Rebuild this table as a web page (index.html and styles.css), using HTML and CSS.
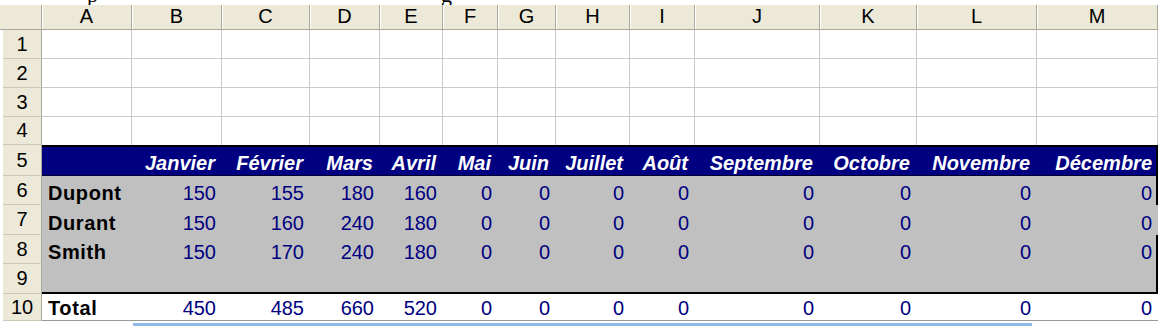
FILE: index.html
```html
<!DOCTYPE html>
<html lang="fr">
<head>
<meta charset="utf-8">
<title>Feuille</title>
<link rel="stylesheet" href="styles.css">
</head>
<body>
<div class="strip"><span class="frag p">p</span><span class="frag g">g</span></div>
<div class="sheet">
  <div class="corner"></div>
  <div class="ch">A</div><div class="ch">B</div><div class="ch">C</div><div class="ch">D</div><div class="ch">E</div><div class="ch">F</div><div class="ch">G</div><div class="ch">H</div><div class="ch">I</div><div class="ch">J</div><div class="ch">K</div><div class="ch">L</div><div class="ch">M</div>

  <div class="rh">1</div>
  <div class="c"></div><div class="c"></div><div class="c"></div><div class="c"></div><div class="c"></div><div class="c"></div><div class="c"></div><div class="c"></div><div class="c"></div><div class="c"></div><div class="c"></div><div class="c"></div><div class="c"></div>
  <div class="rh">2</div>
  <div class="c"></div><div class="c"></div><div class="c"></div><div class="c"></div><div class="c"></div><div class="c"></div><div class="c"></div><div class="c"></div><div class="c"></div><div class="c"></div><div class="c"></div><div class="c"></div><div class="c"></div>
  <div class="rh">3</div>
  <div class="c"></div><div class="c"></div><div class="c"></div><div class="c"></div><div class="c"></div><div class="c"></div><div class="c"></div><div class="c"></div><div class="c"></div><div class="c"></div><div class="c"></div><div class="c"></div><div class="c"></div>
  <div class="rh">4</div>
  <div class="c c4"></div><div class="c c4"></div><div class="c c4"></div><div class="c c4"></div><div class="c c4"></div><div class="c c4"></div><div class="c c4"></div><div class="c c4"></div><div class="c c4"></div><div class="c c4"></div><div class="c c4"></div><div class="c c4"></div><div class="c c4"></div>

  <div class="rh">5</div>
  <div class="mh"></div><div class="mh">Janvier</div><div class="mh">Février</div><div class="mh">Mars</div><div class="mh">Avril</div><div class="mh">Mai</div><div class="mh">Juin</div><div class="mh">Juillet</div><div class="mh">Août</div><div class="mh">Septembre</div><div class="mh">Octobre</div><div class="mh">Novembre</div><div class="mh edge">Décembre</div>

  <div class="rh">6</div>
  <div class="nm">Dupont</div><div class="n">150</div><div class="n">155</div><div class="n">180</div><div class="n">160</div><div class="n">0</div><div class="n">0</div><div class="n">0</div><div class="n">0</div><div class="n">0</div><div class="n">0</div><div class="n">0</div><div class="n edge">0</div>

  <div class="rh">7</div>
  <div class="nm">Durant</div><div class="n">150</div><div class="n">160</div><div class="n">240</div><div class="n">180</div><div class="n">0</div><div class="n">0</div><div class="n">0</div><div class="n">0</div><div class="n">0</div><div class="n">0</div><div class="n">0</div><div class="n">0</div>

  <div class="rh">8</div>
  <div class="nm">Smith</div><div class="n">150</div><div class="n">170</div><div class="n">240</div><div class="n">180</div><div class="n">0</div><div class="n">0</div><div class="n">0</div><div class="n">0</div><div class="n">0</div><div class="n">0</div><div class="n">0</div><div class="n edge">0</div>

  <div class="rh">9</div>
  <div class="n last"></div><div class="n last"></div><div class="n last"></div><div class="n last"></div><div class="n last"></div><div class="n last"></div><div class="n last"></div><div class="n last"></div><div class="n last"></div><div class="n last"></div><div class="n last"></div><div class="n last"></div><div class="n last edge"></div>

  <div class="rh">10</div>
  <div class="nm tot">Total</div><div class="n tot">450</div><div class="n tot">485</div><div class="n tot">660</div><div class="n tot">520</div><div class="n tot">0</div><div class="n tot">0</div><div class="n tot">0</div><div class="n tot">0</div><div class="n tot">0</div><div class="n tot">0</div><div class="n tot">0</div><div class="n tot">0</div>
</div>
<div class="bluebar"></div>
</body>
</html>
```

FILE: styles.css
```css
* { box-sizing: border-box; }

html, body {
  margin: 0;
  padding: 0;
  background: #ffffff;
}

body {
  width: 1164px;
  height: 326px;
  overflow: hidden;
  font-family: "Liberation Sans", Arial, sans-serif;
}

.strip {
  height: 5px;
  overflow: hidden;
  display: flex;
  font-family: "Liberation Serif", "Times New Roman", serif;
  font-size: 22px;
  line-height: 20px;
  color: #000;
}

.frag {
  display: block;
  margin-top: -15px;
}

.frag.p { margin-left: 87px; }
.frag.g { margin-left: 343px; }

.sheet {
  display: grid;
  grid-template-columns: 42px 90px 90px 88px 70px 63px 55px 58px 74px 65px 125px 97px 120px 121px;
  grid-template-rows: 25px 29px 29px 29px 28px 31px 29px 30px 29px 30px 27px;
  width: 1158px;
  font-size: 20px;
  line-height: 23px;
}

.sheet > div {
  display: flex;
  align-items: flex-end;
  white-space: nowrap;
  overflow: hidden;
}

.corner {
  background: #ece9d8;
  border-right: 1px solid #aca899;
  border-bottom: 1px solid #aca899;
}

.ch {
  background: #ece9d8;
  justify-content: center;
  border-right: 1px solid #aca899;
  border-bottom: 1px solid #aca899;
  box-shadow: inset 1px 0 0 #ffffff;
  color: #000;
  padding-bottom: 1px;
}

.rh {
  background: #ece9d8;
  justify-content: center;
  align-items: center !important;
  border-right: 1px solid #aca899;
  border-bottom: 1px solid #cbc7b8;
  margin-left: 3px;
  color: #000;
}

.c {
  border-right: 1px solid #cacaca;
  border-bottom: 1px solid #cacaca;
}

.c4 { border-bottom: none; }

.mh {
  background: #000080;
  color: #ffffff;
  font-weight: bold;
  font-style: italic;
  justify-content: flex-end;
  padding-right: 7px;
  border-top: 2px solid #000;
  border-bottom: 1px solid #000030;
}

.nm {
  background: #c0c0c0;
  color: #000;
  font-weight: bold;
  padding-left: 6px;
  letter-spacing: 0.6px;
}

.n {
  background: #c0c0c0;
  color: #000080;
  justify-content: flex-end;
  padding-right: 6px;
}

.edge { border-right: 2px solid #000; padding-right: 4px; }

.last { border-bottom: 2px solid #000; }

.tot {
  background: #ffffff;
  border-bottom: 1px solid #9a9a9a;
}

.bluebar {
  margin-top: 2px;
  margin-left: 133px;
  width: 899px;
  height: 3px;
  background: #8fbbe9;
}
```
